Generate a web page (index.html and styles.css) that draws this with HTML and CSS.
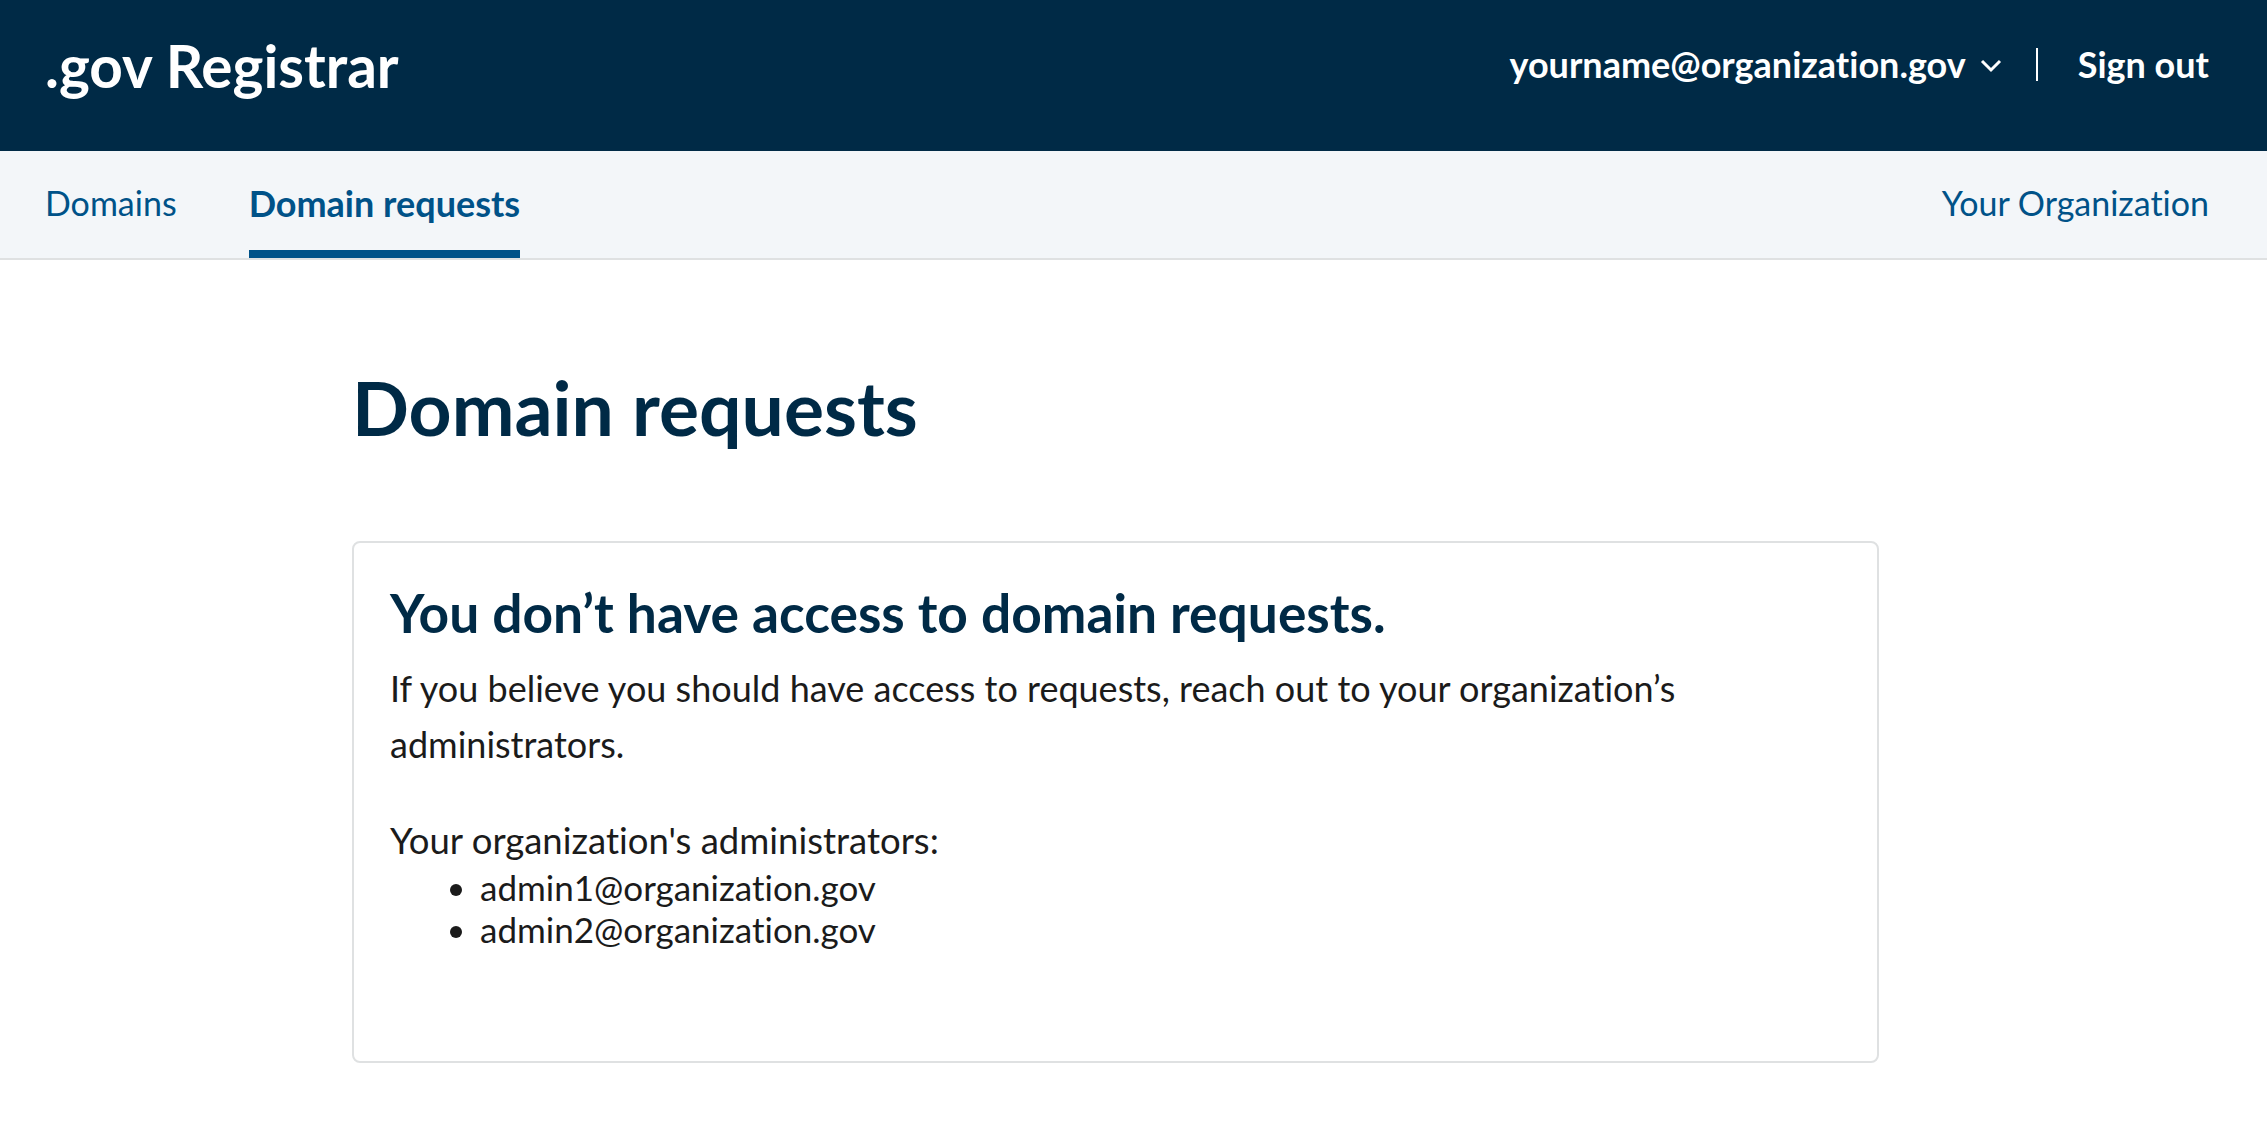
FILE: index.html
```html
<!DOCTYPE html>
<html lang="en">
<head>
<meta charset="utf-8">
<title>Domain requests | .gov Registrar</title>
<link rel="stylesheet" href="styles.css">
</head>
<body>
<header class="site-header">
  <a class="logo" href="#">.gov Registrar</a>
  <div class="user-nav">
    <span class="user-email">yourname@organization.gov</span>
    <svg class="chevron" width="22" height="14" viewBox="0 0 22 14" aria-hidden="true"><path d="M2 2 L11 11 L20 2" fill="none" stroke="#ffffff" stroke-width="3"/></svg>
    <span class="divider"></span>
    <a class="sign-out" href="#">Sign out</a>
  </div>
</header>
<nav class="sub-nav">
  <div class="nav-left">
    <a class="nav-link" href="#">Domains</a>
    <a class="nav-link active" href="#">Domain requests</a>
  </div>
  <a class="nav-link" href="#">Your Organization</a>
</nav>
<main class="main">
  <h1 class="page-title">Domain requests</h1>
  <section class="card">
    <h2 class="card-title">You don’t have access to domain requests.</h2>
    <p class="card-text">If you believe you should have access to requests, reach out to your organization’s administrators.</p>
    <p class="admins-label">Your organization's administrators:</p>
    <ul class="admins-list">
      <li>admin1@organization.gov</li>
      <li>admin2@organization.gov</li>
    </ul>
  </section>
</main>
</body>
</html>
```

FILE: styles.css
```css
* { box-sizing: border-box; }

body {
  margin: 0;
  font-family: Lato, "Source Sans Pro", "Noto Sans", sans-serif;
  font-variant-ligatures: none;
  color: #1b1b1b;
  background: #ffffff;
}

a { text-decoration: none; }

.site-header {
  height: 151px;
  background: #002a46;
  display: flex;
  justify-content: space-between;
  align-items: flex-start;
  padding: 0 58px 0 45px;
}

.logo {
  margin-top: 36px;
  font-size: 58.5px;
  line-height: 1;
  font-weight: 700;
  color: #ffffff;
}

.user-nav {
  margin-top: 46px;
  display: flex;
  align-items: center;
  font-size: 36px;
  line-height: 36px;
  font-weight: 700;
  color: #ffffff;
}

.chevron {
  margin-left: 14px;
  margin-top: 4px;
}

.divider {
  width: 2px;
  height: 33px;
  background: #ffffff;
  margin: 0 40px 0 34px;
}

.sign-out { color: #ffffff; }

.sub-nav {
  height: 109px;
  background: #f3f6f9;
  border-bottom: 2px solid #dfe1e2;
  display: flex;
  justify-content: space-between;
  align-items: flex-start;
  padding: 0 58px 0 45px;
}

.nav-left {
  display: flex;
  gap: 72px;
}

.nav-link {
  display: block;
  padding-top: 34px;
  padding-bottom: 29px;
  border-bottom: 8px solid transparent;
  font-size: 34px;
  line-height: 36px;
  color: #005288;
}

.nav-link.active {
  font-size: 36px;
  font-weight: 700;
  border-bottom-color: #005288;
}

.main {
  padding: 110px 0 0 352px;
}

.page-title {
  margin: 0;
  font-size: 75px;
  line-height: 1;
  font-weight: 700;
  color: #002a46;
  padding-left: 0;
}

.card {
  margin-top: 96px;
  width: 1527px;
  border: 2px solid #dfe1e2;
  border-radius: 8px;
  padding: 42px 36px 111px 36px;
}

.card-title {
  margin: 0;
  font-size: 53.3px;
  line-height: 55px;
  font-weight: 700;
  color: #002a46;
}

.card-text {
  margin: 20px 0 0;
  font-size: 36px;
  line-height: 56px;
}

.admins-label {
  margin: 42px 0 0;
  font-size: 36.5px;
  line-height: 52px;
}

.admins-list {
  margin: 0;
  padding-left: 90px;
  font-size: 35px;
  line-height: 42px;
}
```
